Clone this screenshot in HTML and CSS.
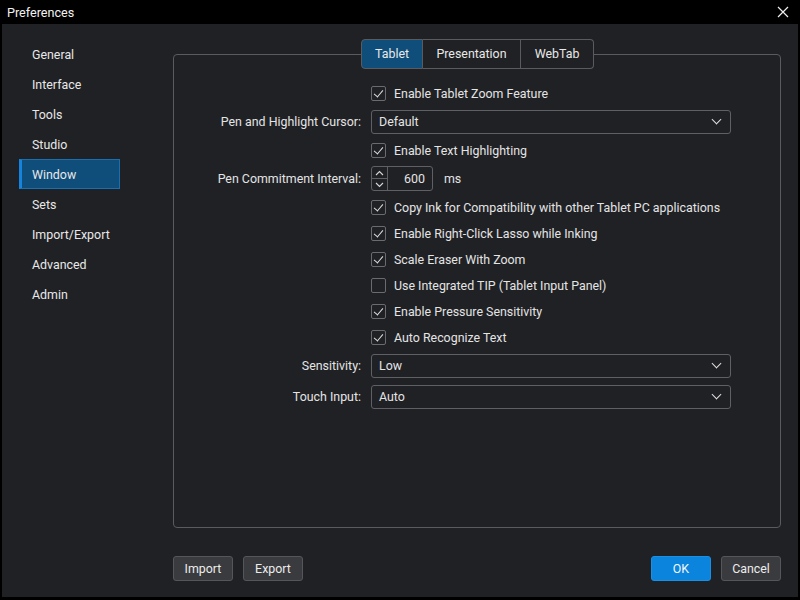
FILE: index.html
```html
<!DOCTYPE html>
<html>
<head>
<meta charset="utf-8">
<title>Preferences</title>
<link rel="stylesheet" href="styles.css">
</head>
<body>
<div class="window">
  <div class="titlebar">
    <span class="title">Preferences</span>
    <svg class="close" width="12" height="12" viewBox="0 0 12 12"><path d="M1 1 L11 11 M11 1 L1 11" stroke="#f0f0f0" stroke-width="1.2" fill="none"/></svg>
  </div>
  <div class="body">
    <nav class="sidebar">
      <div class="nav-item">General</div>
      <div class="nav-item">Interface</div>
      <div class="nav-item">Tools</div>
      <div class="nav-item">Studio</div>
      <div class="nav-item active">Window</div>
      <div class="nav-item">Sets</div>
      <div class="nav-item">Import/Export</div>
      <div class="nav-item">Advanced</div>
      <div class="nav-item">Admin</div>
    </nav>
    <main class="main">
      <div class="tabs">
        <div class="tab tab-tablet active">Tablet</div>
        <div class="tab tab-pres">Presentation</div>
        <div class="tab tab-web">WebTab</div>
      </div>
      <section class="box">
        <div class="form">
          <div class="label r-check"></div>
          <label class="check r-check"><span class="cb on"></span>Enable Tablet Zoom Feature</label>

          <div class="label r-combo">Pen and Highlight Cursor:</div>
          <div class="ctl r-combo"><div class="combo"><span>Default</span><span class="chev"></span></div></div>

          <div class="label r-check"></div>
          <label class="check r-check"><span class="cb on"></span>Enable Text Highlighting</label>

          <div class="label r-combo">Pen Commitment Interval:</div>
          <div class="ctl r-combo">
            <div class="spin">
              <div class="spin-btns">
                <span class="sb up"><svg width="9" height="6" viewBox="0 0 9 6"><path d="M1 5 L4.5 1.5 L8 5" stroke="#d8d8d8" stroke-width="1.1" fill="none"/></svg></span>
                <span class="sb down"><svg width="9" height="6" viewBox="0 0 9 6"><path d="M1 1 L4.5 4.5 L8 1" stroke="#d8d8d8" stroke-width="1.1" fill="none"/></svg></span>
              </div>
              <span class="spin-val">600</span>
            </div>
            <span class="unit">ms</span>
          </div>

          <div class="label r-check"></div>
          <label class="check r-check"><span class="cb on"></span>Copy Ink for Compatibility with other Tablet PC applications</label>

          <div class="label r-check"></div>
          <label class="check r-check"><span class="cb on"></span>Enable Right-Click Lasso while Inking</label>

          <div class="label r-check"></div>
          <label class="check r-check"><span class="cb on"></span>Scale Eraser With Zoom</label>

          <div class="label r-check"></div>
          <label class="check r-check"><span class="cb"></span>Use Integrated TIP (Tablet Input Panel)</label>

          <div class="label r-check"></div>
          <label class="check r-check"><span class="cb on"></span>Enable Pressure Sensitivity</label>

          <div class="label r-check"></div>
          <label class="check r-check"><span class="cb on"></span>Auto Recognize Text</label>

          <div class="label r-combo">Sensitivity:</div>
          <div class="ctl r-combo"><div class="combo"><span>Low</span><span class="chev"></span></div></div>

          <div class="label r-combo">Touch Input:</div>
          <div class="ctl r-combo"><div class="combo"><span>Auto</span><span class="chev"></span></div></div>
        </div>
      </section>
      <div class="footer">
        <div class="group">
          <button class="btn">Import</button>
          <button class="btn">Export</button>
        </div>
        <div class="group">
          <button class="btn primary">OK</button>
          <button class="btn">Cancel</button>
        </div>
      </div>
    </main>
  </div>
</div>
</body>
</html>
```
FILE: styles.css
```css
* { box-sizing: border-box; }
html, body { margin: 0; padding: 0; }
body {
  width: 800px;
  height: 600px;
  background: #000;
  font-family: Roboto, "Liberation Sans", sans-serif;
  font-size: 12.4px;
  color: #e4e4e4;
  overflow: hidden;
}
.window {
  width: 800px;
  height: 600px;
  display: flex;
  flex-direction: column;
  background: #000;
}
.titlebar {
  height: 24px;
  display: flex;
  align-items: center;
  justify-content: space-between;
  padding: 0 11px 0 7px;
  color: #f2f2f2;
  font-size: 12.6px;
}
.close { display: block; }
.body {
  height: 573px;
  margin: 0 2px;
  background: #202124;
  display: flex;
}
.sidebar {
  width: 171px;
  flex: none;
  padding: 15px 0 0 17px;
}
.nav-item {
  width: 101px;
  height: 30px;
  line-height: 31px;
  padding-left: 13px;
  color: #e8e8e8;
}
.nav-item.active {
  background: #0f4e7b;
  border: 1px solid #1b6fae;
  border-left: 3px solid #1385e0;
  padding-left: 10px;
  line-height: 29px;
}
.main {
  flex: 1;
  display: flex;
  flex-direction: column;
  padding: 15px 17px 16px 0;
}
.tabs {
  display: flex;
  justify-content: center;
  height: 30px;
  position: relative;
  z-index: 1;
  padding-left: 1px;
}
.tab {
  height: 30px;
  line-height: 28px;
  text-align: center;
  background: #202124;
  border: 1px solid #5a5b5e;
  border-left: none;
  color: #e8e8e8;
}
.tab-tablet { width: 62px; border-left: 1px solid #5a5b5e; border-radius: 4px 0 0 4px; }
.tab-pres { width: 98px; }
.tab-web { width: 73px; border-radius: 0 4px 4px 0; }
.tab.active { background: #0f4e7b; }
.box {
  flex: 1;
  margin-top: -15px;
  border: 1px solid #5a5b5e;
  border-radius: 4px;
  padding-top: 25px;
}
.form {
  display: grid;
  grid-template-columns: 187px 360px;
  column-gap: 10px;
  grid-auto-rows: auto;
}
.r-check { height: 26px; }
.r-combo { height: 31px; }
.label {
  display: flex;
  align-items: center;
  justify-content: flex-end;
  color: #e4e4e4;
}
.check {
  display: flex;
  align-items: center;
  color: #e4e4e4;
  white-space: nowrap;
}
.cb {
  width: 15px;
  height: 15px;
  border: 1px solid #6a6b6e;
  border-radius: 2px;
  margin-right: 8px;
  flex: none;
  position: relative;
}
.cb.on::after {
  content: "";
  position: absolute;
  left: 4px;
  top: 1px;
  width: 4px;
  height: 8px;
  border-right: 1.2px solid #e0e0e0;
  border-bottom: 1.2px solid #e0e0e0;
  transform: rotate(40deg);
}
.ctl {
  display: flex;
  align-items: center;
}
.combo {
  width: 360px;
  height: 24px;
  border: 1px solid #5f6063;
  border-radius: 3px;
  display: flex;
  align-items: center;
  justify-content: space-between;
  padding: 0 9px 0 7px;
  background: #202124;
}
.chev {
  width: 7px;
  height: 7px;
  border-right: 1.4px solid #e0e0e0;
  border-bottom: 1.4px solid #e0e0e0;
  transform: rotate(45deg);
  margin-top: -4px;
  margin-right: 1px;
}
.spin {
  width: 62px;
  height: 25px;
  border: 1px solid #5f6063;
  border-radius: 3px;
  display: flex;
  align-items: stretch;
}
.spin-btns {
  width: 16px;
  border-right: 1px solid #5f6063;
  display: flex;
  flex-direction: column;
}
.sb {
  flex: 1;
  display: flex;
  align-items: center;
  justify-content: center;
}
.sb.up { border-bottom: 1px solid #5f6063; }
.spin-val {
  flex: 1;
  text-align: right;
  padding-right: 7px;
  line-height: 23px;
}
.unit { margin-left: 11px; }
.footer {
  margin-top: 28px;
  display: flex;
  justify-content: space-between;
}
.group { display: flex; gap: 10px; }
.btn {
  width: 60px;
  height: 25px;
  border: 1px solid #55565a;
  border-radius: 3px;
  background: #3a3b3e;
  color: #ececec;
  font-family: Roboto, "Liberation Sans", sans-serif;
  font-size: 12.4px;
  padding: 0;
}
.btn.primary {
  background: #0a84dc;
  border-color: #1a8fe6;
  color: #f4f8fc;
}
```
